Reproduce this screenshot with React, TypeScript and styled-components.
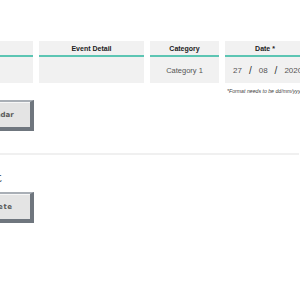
import React from "react";
import styled, { createGlobalStyle } from "styled-components";

const Global = createGlobalStyle`
  html, body { margin: 0; padding: 0; background: #ffffff; overflow: hidden; }
  body { width: 300px; height: 300px; }
`;

const Page = styled.div`
  margin-left: -84px;
  padding-top: 41px;
  width: 390px;
  display: flex;
  flex-direction: column;
`;

const TableRow = styled.div`
  display: flex;
  gap: 6px;
  align-items: flex-start;
`;

const Column = styled.div<{ $w: number }>`
  width: ${(p) => p.$w}px;
  flex: none;
  display: flex;
  flex-direction: column;
`;

const Cell = styled.div`
  background: #f1f1f1;
  height: 42px;
  display: flex;
  flex-direction: column;
`;

const Head = styled.div`
  height: 13px;
  border-bottom: 2px solid #5cc5b3;
  display: flex;
  align-items: center;
  justify-content: center;
  font-family: "Liberation Sans", Arial, sans-serif;
  font-weight: 700;
  font-size: 7px;
  color: #222;
  padding-top: 1px;
`;

const Body = styled.div`
  flex: 1;
  display: flex;
  align-items: center;
  justify-content: center;
  font-family: "Liberation Sans", Arial, sans-serif;
  font-size: 7.5px;
  color: #555;
`;

const DateBody = styled(Body)`
  justify-content: flex-start;
  padding-left: 8px;
  gap: 7px;
  font-size: 8px;
`;

const Slash = styled.span`
  font-size: 10px;
  color: #333;
`;

const Note = styled.div`
  font-family: "Liberation Sans", Arial, sans-serif;
  font-style: italic;
  font-size: 5.2px;
  color: #444;
  margin-top: 5px;
  padding-left: 2px;
  white-space: nowrap;
`;

const ButtonRow = styled.div<{ $top: number }>`
  margin-top: ${(p) => p.$top}px;
  padding-left: 44px;
  display: flex;
`;

const BevelButton = styled.button`
  width: 74px;
  height: 31px;
  box-sizing: border-box;
  background: #e4e4e4;
  border-style: solid;
  border-width: 2px 4px 4px 2px;
  border-color: #a9afb6 #6f767e #6f767e #a9afb6;
  box-shadow: inset 1px 1px 0 #f7f7f7;
  font-family: "DejaVu Sans", Verdana, sans-serif;
  font-weight: 700;
  font-size: 7px;
  color: #5a5a5a;
  padding: 0;
  display: flex;
  align-items: center;
  justify-content: center;
`;

const WideText = styled.span`
  letter-spacing: 0.6px;
  padding-left: 4px;
`;

const Divider = styled.hr`
  margin: 22px 0 0 0;
  width: 383px;
  border: none;
  height: 2px;
  background: #f0f0f0;
`;

const Heading = styled.h2`
  margin: 16px 0 0 0;
  font-family: "DejaVu Serif", Georgia, serif;
  font-weight: 700;
  font-size: 12px;
  line-height: 14px;
  color: #253447;
  white-space: nowrap;
`;

export default function App() {
  return (
    <>
      <Global />
      <Page>
        <TableRow>
          <Column $w={117}>
            <Cell>
              <Head>Event</Head>
              <Body />
            </Cell>
          </Column>
          <Column $w={105}>
            <Cell>
              <Head>Event Detail</Head>
              <Body />
            </Cell>
          </Column>
          <Column $w={69}>
            <Cell>
              <Head>Category</Head>
              <Body>Category 1</Body>
            </Cell>
          </Column>
          <Column $w={80}>
            <Cell>
              <Head>Date *</Head>
              <DateBody>
                <span>27</span>
                <Slash>/</Slash>
                <span>08</span>
                <Slash>/</Slash>
                <span>2020</span>
              </DateBody>
            </Cell>
            <Note>*Format needs to be dd/mm/yyyy</Note>
          </Column>
        </TableRow>
        <ButtonRow $top={6}>
          <BevelButton>Calendar</BevelButton>
        </ButtonRow>
        <Divider />
        <Heading>Delete Event</Heading>
        <ButtonRow $top={7}>
          <BevelButton>
            <WideText>Delete</WideText>
          </BevelButton>
        </ButtonRow>
      </Page>
    </>
  );
}
